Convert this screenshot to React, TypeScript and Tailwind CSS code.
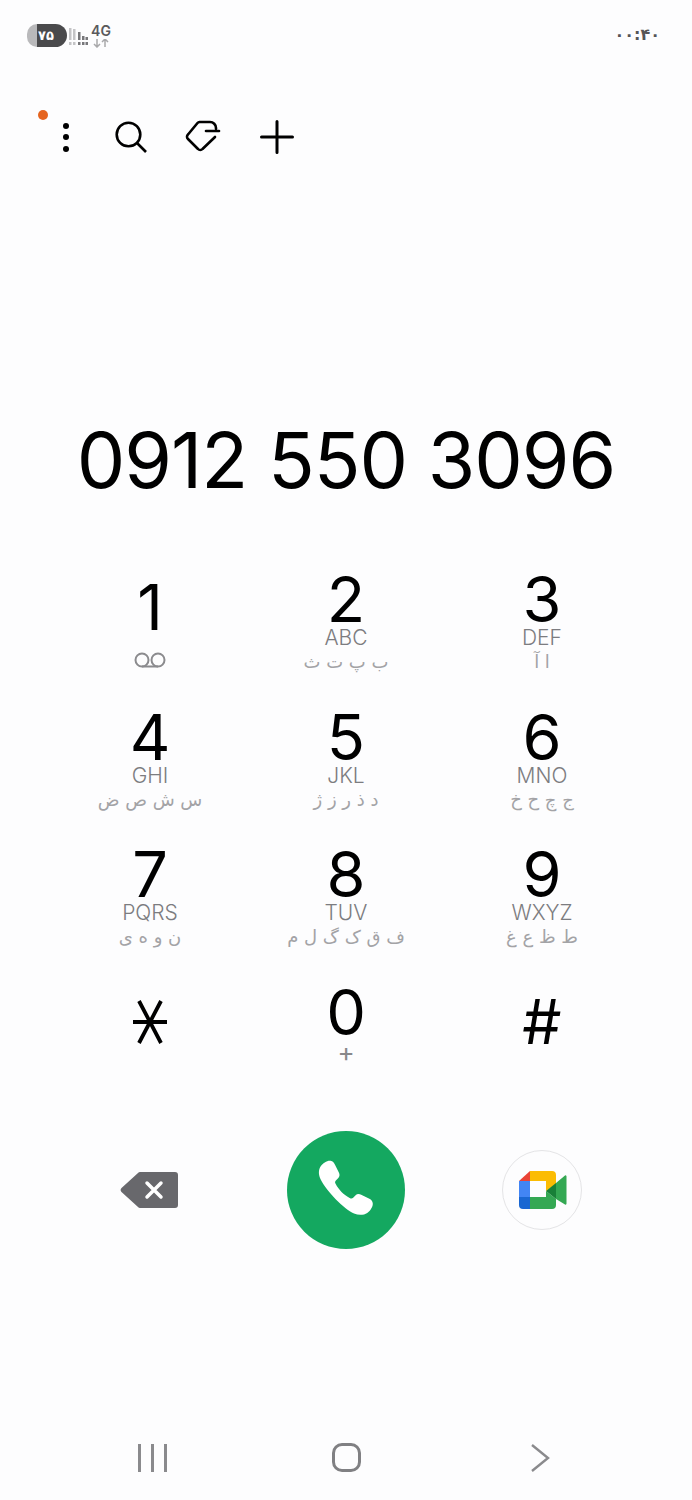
import React from 'react';

const KEYS = [
  { digit: '1', latin: '', farsi: '', voicemail: true },
  { digit: '2', latin: 'ABC', farsi: 'ب پ ت ث' },
  { digit: '3', latin: 'DEF', farsi: 'ا آ' },
  { digit: '4', latin: 'GHI', farsi: 'س ش ص ض' },
  { digit: '5', latin: 'JKL', farsi: 'د ذ ر ز ژ' },
  { digit: '6', latin: 'MNO', farsi: 'ج چ ح خ' },
  { digit: '7', latin: 'PQRS', farsi: 'ن و ه ی' },
  { digit: '8', latin: 'TUV', farsi: 'ف ق ک گ ل م' },
  { digit: '9', latin: 'WXYZ', farsi: 'ط ظ ع غ' },
];

const Farsi: React.FC<{ text: string }> = ({ text }) => (
  <div dir="rtl" className="mt-[3px] h-[22px] leading-[22px] text-[18px] text-[#a3a3a6] whitespace-nowrap font-['DejaVu_Sans',sans-serif]">
    {text}
  </div>
);

const StatusBar = () => (
  <div className="h-[117px] px-[27px] pt-[24px] flex justify-between items-start">
    <div className="flex items-start">
      <div className="flex h-[23px] w-[40px]">
        <div className="w-[10px] bg-[#b9b9bb] rounded-l-full" />
        <div className="w-[30px] bg-[#4a4a4c] rounded-r-full text-white text-[13px] font-bold leading-[23px] pl-[1px] font-['DejaVu_Sans',sans-serif]">
          ۷۵
        </div>
      </div>
      <svg width="20" height="20" viewBox="0 0 20 20" className="mt-[4px] ml-[1px]">
        <g fill="#c4c4c6">
          <rect x="1" y="0" width="2.500" height="12" />
          <rect x="5" y="1" width="2.500" height="11" />
          <rect x="1" y="14" width="2.500" height="3" />
          <rect x="5" y="14" width="2.500" height="3" />
        </g>
        <g fill="#77777a">
          <rect x="10" y="4" width="2.500" height="8" />
          <rect x="10" y="14" width="2.500" height="3" />
          <rect x="14" y="14" width="2.500" height="3" />
          <rect x="14" y="8" width="2.500" height="4" />
          <rect x="17.500" y="14" width="2.500" height="3" />
          <rect x="17.500" y="9" width="2.500" height="3" />
        </g>
      </svg>
      <div className="ml-[3px] w-[20px] flex flex-col items-center">
        <div className="text-[14px] h-[14px] leading-[14px] font-semibold text-[#5a5a5c] font-['Inter',sans-serif]">4G</div>
        <svg width="16" height="9" viewBox="0 0 16 9" fill="none" stroke="#a9a9ab" strokeWidth="1.500" className="mt-[1px]">
          <path d="M4 0v8M1 5l3 3 3-3M12 8V0M9 3l3-3 3 3" />
        </svg>
      </div>
    </div>
    <div className="mr-[5px] mt-[1px] text-[16px] leading-[20px] tracking-[1.5px] font-bold text-[#555557] font-['DejaVu_Sans',sans-serif]">۰۰:۴۰</div>
  </div>
);

const Toolbar = () => (
  <div className="relative h-[40px] flex items-center pl-[63px]">
    <span className="absolute left-[38px] top-[-7px] w-[10px] h-[10px] rounded-full bg-[#e5641f]" />
    <div className="w-[6px] flex flex-col gap-[5.5px]">
      <span className="w-[6px] h-[6px] rounded-full bg-black" />
      <span className="w-[6px] h-[6px] rounded-full bg-black" />
      <span className="w-[6px] h-[6px] rounded-full bg-black" />
    </div>
    <svg width="34" height="34" viewBox="0 0 34 34" fill="none" stroke="#000" strokeWidth="2.600" className="ml-[45px]">
      <circle cx="14.500" cy="14.500" r="11.800" />
      <path d="M23 23l9 9" />
    </svg>
    <svg width="36" height="34" viewBox="0 0 36 34" fill="none" stroke="#000" strokeWidth="2.600" strokeLinecap="round" strokeLinejoin="round" className="ml-[37px]">
      <path d="M31 9V8a6 6 0 0 0-6-6H14.500a3 3 0 0 0-2 1L3 14.500a3 3 0 0 0 0 4.500L13 29a3 3 0 0 0 4.500 0L30 17" />
      <path d="M21 11h13" />
    </svg>
    <svg width="34" height="34" viewBox="0 0 34 34" fill="none" stroke="#000" strokeWidth="3" strokeLinecap="round" className="ml-[39px]">
      <path d="M17 1.500v31M1.500 17h31" />
    </svg>
  </div>
);

const Key: React.FC<{ digit: string; latin: string; farsi: string; voicemail?: boolean }> = ({ digit, latin, farsi, voicemail }) => (
  <div className="h-[137.5px] flex flex-col items-center">
    <div className={`${voicemail ? 'mt-[8px]' : ''} h-[57px] leading-[57px] text-[63px] text-black`}>{digit}</div>
    {voicemail ? (
      <svg width="32" height="16" viewBox="0 0 32 16" fill="none" stroke="#8b8b8e" strokeWidth="2" className="mt-[16px]">
        <circle cx="8" cy="8" r="6.500" />
        <circle cx="24" cy="8" r="6.500" />
        <path d="M8 14.500h16" />
      </svg>
    ) : (
      <>
        <div className="h-[20px] leading-[20px] text-[21px] font-light text-[#7c7c80]">{latin}</div>
        <Farsi text={farsi} />
      </>
    )}
  </div>
);

const Keypad = () => (
  <div className="mx-[52px] w-[588px] grid grid-cols-3 font-['Inter',sans-serif]">
    {KEYS.map(k => (
      <Key key={k.digit} {...k} />
    ))}
    <div className="h-[116px] flex justify-center pt-[15px]">
      <svg width="36" height="46" viewBox="0 0 36 46" fill="none" stroke="#000" strokeWidth="3.800">
        <path d="M7 2l22 42M29 2L7 44M1 23h34" />
      </svg>
    </div>
    <div className="h-[116px] flex flex-col items-center">
      <div className="h-[57px] leading-[57px] text-[63px] text-black">0</div>
      <div className="h-[24px] leading-[24px] text-[26px] text-[#88888b] mt-[-1px]">+</div>
    </div>
    <div className="h-[116px] flex justify-center">
      <div className="h-[58px] leading-[58px] text-[62px] text-black mt-[9px]">#</div>
    </div>
  </div>
);

const Actions = () => (
  <div className="mx-[52px] w-[588px] h-[118px] grid grid-cols-3 items-center justify-items-center mt-[31px]">
    <svg width="58" height="38" viewBox="0 0 58 38" className="mr-[2px]">
      <path d="M20 1h35a3 3 0 0 1 3 3v30a3 3 0 0 1-3 3H20a3 3 0 0 1-2-1L1.500 21a3 3 0 0 1 0-4L18 2a3 3 0 0 1 2-1z" fill="#68686c" />
      <path d="M27 12l14 14M41 12L27 26" stroke="#fff" strokeWidth="3.500" strokeLinecap="round" />
    </svg>
    <div className="w-[118px] h-[118px] rounded-full bg-[#14a860] flex items-center justify-center">
      <svg width="66" height="66" viewBox="0 0 60 60" fill="#fff">
        <path d="M7 8.500c2-3 6-5.500 9-5 2 .4 3 1.500 4 3.500l3.500 7c1 2 .8 3.800-.7 5.300l-2 2c-.8.800-.9 1.700-.4 2.800 3.200 6 7.200 10 13.300 13.300 1.100.6 2 .4 2.800-.4l2-2c1.500-1.500 3.300-1.700 5.300-.7l7 3.500c2 1 3.100 2 3.500 4 .5 3-2 7-5 9-3 2-7.500 2.400-12 .6C28 47 13 32 7 20.500c-2-4-2.300-8.500 0-12z" />
      </svg>
    </div>
    <div className="w-[80px] h-[80px] rounded-full border border-[#e4e4e6] flex items-center justify-center">
      <svg width="48" height="40" viewBox="0 0 48 40" className="ml-[1px]">
        <path d="M11 1v10H0z" fill="#ea4335" />
        <path d="M11 1h22a4 4 0 0 1 4 4v9l-10 7V11H11z" fill="#fbbc04" />
        <path d="M0 11h11v16H0z" fill="#4285f4" />
        <path d="M0 27h11v12H4a4 4 0 0 1-4-4z" fill="#1967d2" />
        <path d="M11 27h16v-6l10 8v6a4 4 0 0 1-4 4H11z" fill="#34a853" />
        <path d="M37 13l9-7.500a1 1 0 0 1 1.500 1v27a1 1 0 0 1-1.500 1L37 29z" fill="#34a853" />
        <path d="M27 21l10-8v16z" fill="#188038" />
      </svg>
    </div>
  </div>
);

const NavBar = () => (
  <div className="mt-[194px] h-[30px] mx-[52px] w-[588px] grid grid-cols-3 items-center justify-items-center">
    <div className="flex gap-[10px] ml-[4px]">
      <span className="w-[3px] h-[28px] bg-[#8a8a8d]" />
      <span className="w-[3px] h-[28px] bg-[#8a8a8d]" />
      <span className="w-[3px] h-[28px] bg-[#8a8a8d]" />
    </div>
    <span className="w-[29px] h-[29px] rounded-[10px] border-[3px] border-[#808083]" />
    <svg width="20" height="30" viewBox="0 0 20 30" fill="none" stroke="#8a8a8d" strokeWidth="2.400" className="ml-[-4px]">
      <path d="M2 2l16 13L2 28" />
    </svg>
  </div>
);

export default function App() {
  return (
    <div className="w-[692px] h-[1500px] overflow-hidden bg-[#fdfdfe] flex flex-col">
      <StatusBar />
      <Toolbar />
      <div className="mt-[253px] h-[100px] leading-[100px] text-center text-[77px] tracking-[-1px] text-black whitespace-nowrap font-['Inter',sans-serif]">
        0912 550 3096
      </div>
      <div className="h-[61px]" />
      <Keypad />
      <Actions />
      <NavBar />
    </div>
  );
}
